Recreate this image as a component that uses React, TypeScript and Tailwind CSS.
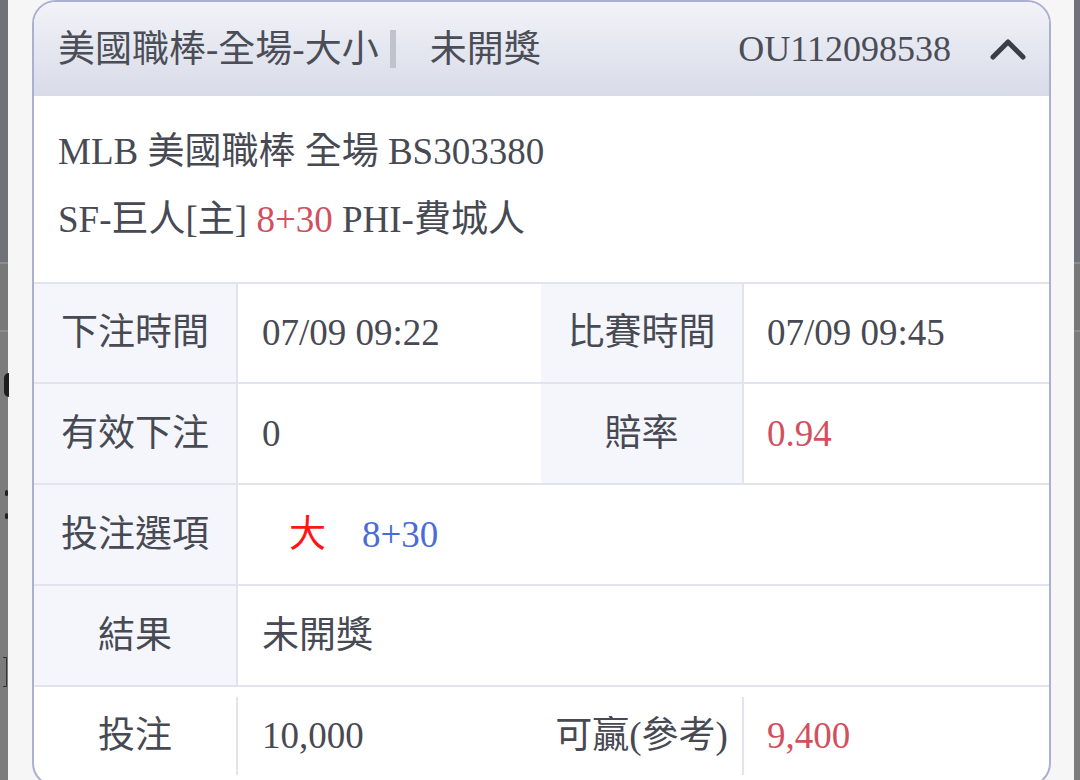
import React from 'react';

const font = "font-['Liberation_Serif','Noto_Sans_CJK_TC',serif]";

interface RowProps {
  label: string;
  value: React.ReactNode;
  label2?: string;
  value2?: React.ReactNode;
  h?: string;
}

const InfoRow: React.FC<RowProps> = ({ label, value, label2, value2, h = 'h-[101px]' }) => (
  <div className={`flex ${h} border-t-2 border-[#e1e3ef]`}>
    <div className="w-[204px] shrink-0 flex items-center justify-center bg-[#f5f6fb] border-r-2 border-[#e1e3ef]">
      {label}
    </div>
    {label2 ? (
      <>
        <div className="w-[303px] shrink-0 flex items-center pl-[24px]">{value}</div>
        <div className="w-[203px] shrink-0 flex items-center justify-center bg-[#f5f6fb] border-r-2 border-[#e1e3ef]">
          {label2}
        </div>
        <div className="flex-1 flex items-center pl-[23px]">{value2}</div>
      </>
    ) : (
      <div className="flex-1 flex items-center pl-[24px]">{value}</div>
    )}
  </div>
);

const SideStrip: React.FC<{ marks?: boolean }> = ({ marks }) => (
  <div className="relative h-full flex flex-col">
    <div className="h-[262px] bg-[#70727a]" />
    <div className="h-[2px] bg-[#8c8c8c]" />
    <div className="h-[66px] bg-[#787878]" />
    <div className="h-[2px] bg-[#8c8c8c]" />
    <div className="flex-1 bg-[#7c7c7c]" />
    {marks && (
      <>
        <div className="absolute left-[4px] top-[373px] w-[5px] h-[24px] rounded-l-full bg-[#1e1e1e]" />
        <div className="absolute left-[5px] top-[490px] w-[3px] h-[6px] rounded-full bg-[#222]" />
        <div className="absolute left-[5px] top-[513px] w-[3px] h-[6px] rounded-full bg-[#222]" />
        <div className="absolute left-[3px] top-[657px] w-[4px] h-[30px] border-y border-r border-[#333]" />
      </>
    )}
  </div>
);

export default function App() {
  return (
    <div className={`w-[1080px] h-[780px] overflow-hidden flex bg-[#f6f6f6] text-[#474953] text-[37px] ${font}`}>
      <div className="w-[8px] shrink-0">
        <SideStrip marks />
      </div>

      <div className="w-[1066px] shrink-0 pl-[24px] pr-[23px]">
        <div className="rounded-[24px] border-2 border-[#abafd2] overflow-hidden bg-white">
          {/* header */}
          <div className="h-[94px] flex items-center pl-[24px] pr-[22px] bg-gradient-to-b from-[#f2f3f8] to-[#d8dbe8] text-[#4b4d57]">
            <span className="leading-none">美國職棒-全場-大小</span>
            <span className="w-[6px] h-[38px] bg-[#c1c3cc] ml-[11px] mr-[34px]" />
            <span className="leading-none">未開獎</span>
            <span className="ml-auto leading-none mr-[38px] text-[36px]">OU112098538</span>
            <svg width="38" height="26" viewBox="0 0 38 26">
              <polyline points="4,21 19,6 34,21" fill="none" stroke="#3c3e47" strokeWidth="5" strokeLinecap="round" strokeLinejoin="round" />
            </svg>
          </div>

          {/* match info */}
          <div className="h-[186px] pl-[24px] pt-[22px] leading-[68px]">
            <div>MLB 美國職棒 全場 BS303380</div>
            <div>
              SF-巨人[主] <span className="text-[#d2505e]">8+30</span> PHI-費城人
            </div>
          </div>

          <InfoRow h="h-[100px]" label="下注時間" value="07/09 09:22" label2="比賽時間" value2="07/09 09:45" />
          <InfoRow label="有效下注" value="0" label2="賠率" value2={<span className="text-[#d2505e]">0.94</span>} />
          <InfoRow
            label="投注選項"
            value={
              <div className="pl-[27px] flex items-center">
                <span className="text-[#ff1515]">大</span>
                <span className="ml-[36px] text-[#4a6bd8]">8+30</span>
              </div>
            }
          />
          <InfoRow label="結果" value="未開獎" />

          <div className="flex h-[100px] border-t-2 border-[#e1e3ef]">
            <div className="w-[202px] shrink-0 flex items-center justify-center">投注</div>
            <div className="w-[2px] shrink-0 bg-[#e1e3ef] mt-[10px] mb-[10px]" />
            <div className="w-[303px] shrink-0 flex items-center pl-[24px]">10,000</div>
            <div className="w-[201px] shrink-0 flex items-center justify-center">可贏(參考)</div>
            <div className="w-[2px] shrink-0 bg-[#e1e3ef] mt-[10px] mb-[10px]" />
            <div className="flex-1 flex items-center pl-[23px] text-[#d2505e]">9,400</div>
          </div>
        </div>
      </div>

      <div className="w-[6px] shrink-0">
        <SideStrip />
      </div>
    </div>
  );
}
